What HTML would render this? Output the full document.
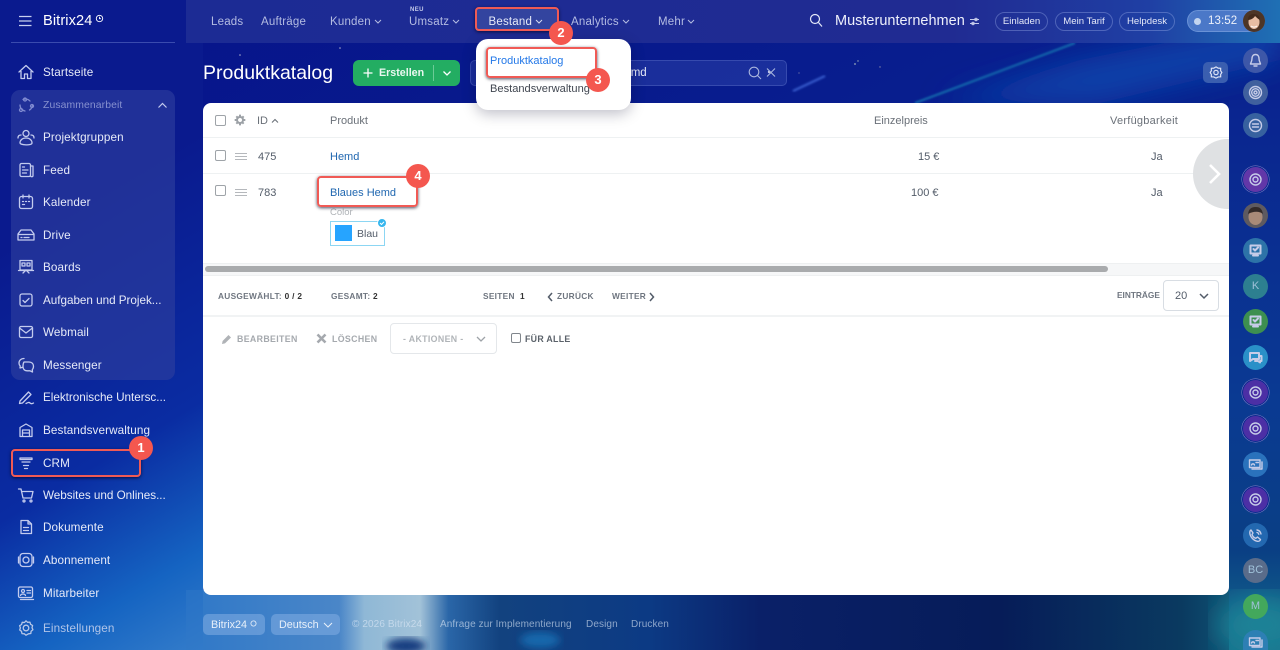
<!DOCTYPE html>
<html lang="de"><head><meta charset="utf-8"><title>Produktkatalog</title>
<style>
*{box-sizing:border-box}
html,body{margin:0;padding:0;width:1280px;height:650px;overflow:hidden;background:#08198a}
body{font-family:"Liberation Sans",sans-serif}
#root{position:absolute;left:0;top:0;width:1280px;height:650px;overflow:hidden}
.a,.t{position:absolute}
.t{white-space:nowrap;line-height:14px}
.s{left:43px;color:#e6eaf8;font-size:11.7px;letter-spacing:.1px}
.x{letter-spacing:-.02px}
.n{color:#b4bce2;font-size:11.5px;top:15px;letter-spacing:.2px}
.ic{position:absolute;left:17px;width:18px;height:18px;fill:none;stroke:#c3cbee;stroke-width:1.3;stroke-linecap:round;stroke-linejoin:round}
.red{position:absolute;border:2.5px solid #f05a55;border-radius:4px;box-shadow:0 1px 3px rgba(0,0,30,.7)}
.b{position:absolute;width:24px;height:24px;border-radius:50%;background:#f4574f;color:#fff;font-size:13px;font-weight:bold;text-align:center;line-height:24px}
.pill{position:absolute;top:12px;height:19px;border:1px solid rgba(170,185,240,.35);border-radius:10px;color:#e4e8f8;font-size:9.6px;line-height:18px;text-align:center}
.r{position:absolute;left:1243px;width:25px;height:25px;border-radius:50%;color:#9fc0d8;font-size:11px;line-height:25px;text-align:center}
.ri{position:absolute;left:5px;top:5px;width:15px;height:15px;fill:none;stroke:#c6cce8;stroke-width:1.4;stroke-linecap:round;stroke-linejoin:round}
.h{color:#6a7078;font-size:11px;top:114px}
.c{position:absolute;width:11px;height:11px;border:1.3px solid #9ea3a8;border-radius:2px;background:#fff}
.d{color:#535c69;font-size:11px}
.f{color:#6f7680;font-size:8.3px;font-weight:bold;letter-spacing:.3px}
.g{color:#a5a9ae;font-size:8.8px;font-weight:bold;letter-spacing:.35px}
.lnk{color:#2067b0;font-size:11px}
.ft{color:rgba(225,235,248,.6);font-size:10px;top:618px;letter-spacing:.1px}
</style></head><body><div id="root">

<svg class="a" style="left:0;top:0" width="1280" height="650" viewBox="0 0 1280 650">
<defs>
<linearGradient id="bg" x1="0" y1="0" x2="1" y2="1"><stop offset="0" stop-color="#07128a"/><stop offset=".5" stop-color="#08208f"/><stop offset="1" stop-color="#062f7a"/></linearGradient>
<linearGradient id="side" gradientUnits="userSpaceOnUse" x1="0" y1="250" x2="240" y2="650"><stop offset="0" stop-color="#0a1a8e"/><stop offset=".5" stop-color="#0a2ca2"/><stop offset=".78" stop-color="#1564c2"/><stop offset="1" stop-color="#3b82cc"/></linearGradient>
<linearGradient id="rail" x1="0" y1="0" x2="0" y2="1"><stop offset="0" stop-color="#0a2490"/><stop offset=".55" stop-color="#0a3a92"/><stop offset=".82" stop-color="#0a3f84"/><stop offset="1" stop-color="#14708c"/></linearGradient>
<linearGradient id="top" x1="0" y1="0" x2="1" y2="0"><stop offset="0" stop-color="#1c2b94"/><stop offset=".7" stop-color="#202b92"/><stop offset=".88" stop-color="#1f3fa4"/><stop offset="1" stop-color="#1f70b4"/></linearGradient>
<linearGradient id="foot" x1="0" y1="0" x2="1" y2="0"><stop offset="0" stop-color="#2f78c8"/><stop offset=".14" stop-color="#4a86c8"/><stop offset=".163" stop-color="#8fb8d6"/><stop offset=".214" stop-color="#a2c2d8"/><stop offset=".24" stop-color="#2a66a8"/><stop offset=".287" stop-color="#12427f"/><stop offset=".424" stop-color="#0c3a84"/><stop offset=".525" stop-color="#0a2068"/><stop offset=".744" stop-color="#061c58"/><stop offset=".91" stop-color="#0a3a60"/><stop offset="1" stop-color="#126a88"/></linearGradient>
<filter id="bl"><feGaussianBlur stdDeviation="14"/></filter>
<filter id="b2"><feGaussianBlur stdDeviation="4"/></filter>
<filter id="b1"><feGaussianBlur stdDeviation="1"/></filter>
</defs>
<rect width="1280" height="650" fill="url(#bg)"/>
<rect x="186" y="590" width="1094" height="60" fill="url(#foot)"/>
<ellipse cx="406" cy="646" rx="20" ry="8" fill="#123e80" filter="url(#b2)"/>
<ellipse cx="540" cy="640" rx="20" ry="8" fill="#1468ac" filter="url(#b2)"/>
<rect x="1229" y="100" width="51" height="550" fill="url(#rail)"/>
<ellipse cx="1262" cy="625" rx="45" ry="30" fill="#1f8296" filter="url(#bl)"/>
<path d="M940 103L1080 60L1280 20V60L1100 103Z" fill="#0c3fa8" filter="url(#bl)"/>
<path d="M915 103L1075 43" stroke="#1a87b8" stroke-width="1.500" filter="url(#b1)"/>
<path d="M793 91L825 76" stroke="#3f66d8" stroke-width="1.800" filter="url(#b1)"/>
<circle cx="855" cy="64" r=".9" fill="#9ab"/><circle cx="858" cy="61" r=".7" fill="#9ab"/><circle cx="769" cy="72" r="1.200" fill="#dde"/><circle cx="880" cy="67" r=".7" fill="#88a"/><circle cx="799" cy="73" r=".6" fill="#88a"/><circle cx="240" cy="55" r=".8" fill="#aac"/><circle cx="340" cy="48" r=".8" fill="#aac"/>
<rect x="0" y="0" width="203" height="650" fill="url(#side)"/>
<rect x="186" y="590" width="17" height="60" fill="#2f78c8" opacity=".5"/>
<rect x="186" width="1094" height="43" fill="url(#top)"/>
<rect x="11" y="42" width="164" height="1" fill="#3a4bae"/>
<rect x="11" y="90" width="164" height="290" rx="9" fill="#2e3f9e" opacity=".62"/>
</svg>

<!-- sidebar -->
<svg class="a" style="left:19px;top:15px" width="14" height="12" fill="none" stroke="#c8d0f0" stroke-width="1.200"><path d="M0 1.500h12.500M0 6h12.500M0 10.500h12.500"/></svg>
<div class="t" style="left:43px;top:14px;color:#fff;font-size:14.600px;letter-spacing:.1px">Bitrix24</div>
<svg class="a" style="left:95px;top:14px" width="9" height="9" fill="none" stroke="#fff" stroke-width=".9"><circle cx="4.500" cy="4.500" r="3.200"/><path d="M4.500 2.800v1.900h1.500"/></svg>

<svg class="ic" style="top:63px" viewBox="0 0 18 18"><path d="M2 9L9 2.500 16 9M4 8v7.500h3.500v-4.500h3v4.500H14V8"/></svg>
<svg class="ic" style="top:96px;stroke:#7f8ad0" viewBox="0 0 18 18"><path d="M6 3.500a6 6 0 0 1 7 1.500M15.500 9a6 6 0 0 1-3 5M8 15a6 6 0 0 1-5-6"/><circle cx="8" cy="3.500" r="1.500"/><circle cx="15" cy="10" r="1.500"/><circle cx="4" cy="14" r="1.500"/></svg>
<svg class="ic" style="top:128px" viewBox="0 0 18 18"><circle cx="9" cy="5.500" r="3"/><path d="M3 15c0-3 2.500-5 6-5s6 2 6 5-12 2-12 0zM1 10c0-2 1-3 3-3M17 10c0-2-1-3-3-3"/></svg>
<svg class="ic" style="top:161px" viewBox="0 0 18 18"><rect x="3" y="2.500" width="10.500" height="13" rx="1.500"/><path d="M13.500 5H16v9.500a1 1 0 0 1-2.500 0M5.500 6h2M5.500 9h5.500M5.500 12h4"/></svg>
<svg class="ic" style="top:193px" viewBox="0 0 18 18"><rect x="2.500" y="3.500" width="13" height="12" rx="2"/><path d="M6 2v3M12 2v3M5.500 8.500h1M8.500 8.500h1M11.500 8.500h1M5.500 11.500h2"/></svg>
<svg class="ic" style="top:226px" viewBox="0 0 18 18"><path d="M4 4h10l3 4v6H1V8zM1 8.500h16M4 11.500h1M7 11.500h5"/></svg>
<svg class="ic" style="top:258px" viewBox="0 0 18 18"><rect x="3" y="2.500" width="12" height="9.500"/><rect x="5" y="5" width="3" height="3"/><rect x="10" y="5" width="3" height="3"/><path d="M6 15l3-3 3 3M1.500 12.500h15"/></svg>
<svg class="ic" style="top:291px" viewBox="0 0 18 18"><rect x="3" y="3" width="12" height="12" rx="2"/><path d="M6 9.500l2 2 4-4"/></svg>
<svg class="ic" style="top:323px" viewBox="0 0 18 18"><rect x="2.500" y="3.500" width="13" height="11" rx="1.500"/><path d="M2.500 5l6.500 5 6.500-5"/></svg>
<svg class="ic" style="top:356px" viewBox="0 0 18 18"><path d="M7 2.500c-3 0-5 2-5 4.500 0 1.200.5 2.300 1.200 3L3 12l2.500-.8M7 6h5c2.800 0 4.500 1.800 4.500 4s-.6 3-1.200 3.600l.2 2.400-2.500-1.200H10c-2.500 0-4-1.500-4-4.400S7 6 7 6z"/></svg>
<svg class="ic" style="top:388px" viewBox="0 0 18 18"><path d="M3 13L11.500 4l2.500 2.500L5.500 15 2.500 15.500zM9 15.500c2-1 3-1.500 4-.5s2 1 3.500 0"/></svg>
<svg class="ic" style="top:421px" viewBox="0 0 18 18"><path d="M3 15.500V6.500L9 3l6 3.500v9zM5.500 15.500V9h7v6.500M5.500 12h7"/></svg>
<svg class="ic" style="top:454px" viewBox="0 0 18 18"><path d="M3 4h12v1.500H3zM5 8h8M6.500 11.500h5M7.500 14.500h3"/></svg>
<svg class="ic" style="top:486px" viewBox="0 0 18 18"><path d="M1.500 3h2.500l2 9h8.500l1.500-6.500H5"/><circle cx="7" cy="15" r="1"/><circle cx="14" cy="15" r="1"/></svg>
<svg class="ic" style="top:518px" viewBox="0 0 18 18"><path d="M4 2.500h7l3.500 3.500v9.500H4zM11 2.500V6h3.500M6.500 9.500h5M6.500 12.500h5"/></svg>
<svg class="ic" style="top:551px" viewBox="0 0 18 18"><rect x="3" y="2.500" width="12" height="13" rx="3"/><circle cx="9" cy="9" r="3"/><path d="M1.500 6v6M16.500 6v6"/></svg>
<svg class="ic" style="top:584px" viewBox="0 0 18 18"><rect x="1.500" y="3" width="14" height="10.500" rx="1.500"/><circle cx="6" cy="7" r="1.500"/><path d="M3.500 11.500c.5-2 4.500-2 5 0M10 6.500h3.500M10 9h3.500M3.500 15.500h13"/></svg>
<svg class="ic" style="top:619px;stroke:#b7c7e8" viewBox="0 0 18 18"><circle cx="9" cy="9" r="2.800"/><path d="M9 1.800l1.600 1.500 2.300-.2.700 2.200 2 1.200-.6 2.200.9 2-1.800 1.500-.3 2.300-2.300.3L9 16.200l-1.700-1.400-2.300-.2-.5-2.300-1.800-1.300.7-2.200-.8-2.100 2-1.200.6-2.200 2.300.2z"/></svg>

<div class="t s" style="top:66px">Startseite</div>
<div class="t s" style="top:99px;color:#8791cf;font-size:10.400px">Zusammenarbeit</div>
<svg class="a" style="left:157px;top:102px" width="11" height="7" fill="none" stroke="#c3cbee" stroke-width="1.200"><path d="M1.500 5.500L5.500 1.500l4 4"/></svg>
<div class="t s" style="top:131px">Projektgruppen</div>
<div class="t s" style="top:164px">Feed</div>
<div class="t s" style="top:196px">Kalender</div>
<div class="t s" style="top:229px">Drive</div>
<div class="t s" style="top:261px">Boards</div>
<div class="t s x" style="top:294px">Aufgaben und Projek...</div>
<div class="t s" style="top:326px">Webmail</div>
<div class="t s" style="top:359px">Messenger</div>
<div class="t s x" style="top:391px">Elektronische Untersc...</div>
<div class="t s" style="top:424px">Bestandsverwaltung</div>
<div class="t s" style="top:457px">CRM</div>
<div class="t s x" style="top:489px">Websites und Onlines...</div>
<div class="t s" style="top:521px">Dokumente</div>
<div class="t s" style="top:554px">Abonnement</div>
<div class="t s" style="top:587px">Mitarbeiter</div>
<div class="t s" style="top:622px;color:#b0c4e8">Einstellungen</div>

<!-- top nav -->
<div class="t n" style="left:211px">Leads</div>
<div class="t n" style="left:261px">Aufträge</div>
<div class="t n" style="left:330px">Kunden</div>
<svg class="a" style="left:374px;top:19px" width="8" height="5" fill="none" stroke="#b4bce2"><path d="M1 1l3 3 3-3"/></svg>
<div class="t" style="left:410px;top:3px;color:#c5cbea;font-size:6px;font-weight:bold;letter-spacing:.4px">NEU</div>
<div class="t n" style="left:409px">Umsatz</div>
<svg class="a" style="left:452px;top:19px" width="8" height="5" fill="none" stroke="#b4bce2"><path d="M1 1l3 3 3-3"/></svg>
<div class="a" style="left:476px;top:8px;width:82px;height:23px;background:#33449f"></div>
<div class="t n" style="left:488.500px;color:#e6eaf8">Bestand</div>
<svg class="a" style="left:535px;top:19px" width="8" height="5" fill="none" stroke="#d5dbf2"><path d="M1 1l3 3 3-3"/></svg>
<div class="t n" style="left:571px">Analytics</div>
<svg class="a" style="left:622px;top:19px" width="8" height="5" fill="none" stroke="#b4bce2"><path d="M1 1l3 3 3-3"/></svg>
<div class="t n" style="left:658px">Mehr</div>
<svg class="a" style="left:687px;top:19px" width="8" height="5" fill="none" stroke="#b4bce2"><path d="M1 1l3 3 3-3"/></svg>
<svg class="a" style="left:809px;top:13px" width="14" height="15" fill="none" stroke="#e4e8f8" stroke-width="1.200"><circle cx="6" cy="6" r="4.500"/><path d="M9.500 9.500L13 13.500"/></svg>
<div class="t" style="left:835px;top:14px;color:#eef0fb;font-size:14.500px">Musterunternehmen</div>
<svg class="a" style="left:969px;top:16px" width="11" height="11" fill="none" stroke="#c5cbea"><path d="M1 3.500h9M1 7.500h9"/><circle cx="7" cy="3.500" r="1.200"/><circle cx="4" cy="7.500" r="1.200"/></svg>
<div class="pill" style="left:995px;width:53px">Einladen</div>
<div class="pill" style="left:1055px;width:58px">Mein Tarif</div>
<div class="pill" style="left:1119px;width:56px">Helpdesk</div>
<div class="a" style="left:1187px;top:10px;width:78px;height:22px;border-radius:11px;background:#4b78c8;border:1px solid #6a92d6"></div>
<div class="a" style="left:1194px;top:18px;width:7px;height:7px;border-radius:50%;background:#c3d5f0"></div>
<div class="t" style="left:1208px;top:14px;color:#eef2fb;font-size:11.500px;letter-spacing:.1px">13:52</div>
<svg class="a" style="left:1243px;top:10px" width="22" height="22" viewBox="0 0 22 22"><circle cx="11" cy="11" r="11" fill="#4d3526"/><ellipse cx="11" cy="12" rx="5.500" ry="7" fill="#e7bda3"/><path d="M5 10c0-5 3-6 6-6s6 2 6 6c-2-1-4-3-5-4-1 2-4 4-7 4z" fill="#432a1c"/><path d="M8 16c2 1.500 4 1.500 6 0" stroke="#fff" fill="none"/></svg>

<!-- toolbar -->
<div class="t" style="left:203px;top:62px;color:#fff;font-size:19.500px;line-height:22px">Produktkatalog</div>
<div class="a" style="left:353px;top:60px;width:107px;height:26px;border-radius:6px;background:#23ad62"></div>
<div class="a" style="left:433px;top:65px;width:1px;height:16px;background:#6ccb96"></div>
<svg class="a" style="left:363px;top:68px" width="10" height="10" stroke="#fff" stroke-width="1.300"><path d="M5 .5v9M.5 5h9"/></svg>
<div class="t" style="left:379px;top:66px;color:#eaf8f0;font-size:10.700px;font-weight:bold">Erstellen</div>
<svg class="a" style="left:442px;top:70px" width="10" height="7" fill="none" stroke="#fff" stroke-width="1.300"><path d="M1.500 1.500L5 5l3.500-3.500"/></svg>
<div class="a" style="left:470px;top:60px;width:317px;height:26px;border-radius:5px;background:rgba(100,125,215,.2);border:1px solid rgba(140,160,230,.25)"></div>
<div class="t" style="left:616px;top:66px;color:#e8ecf8;font-size:11.500px">Hemd</div>
<svg class="a" style="left:748px;top:66px" width="28" height="14" fill="none" stroke="#aab6de" stroke-width="1.100"><circle cx="6" cy="6" r="4.800"/><path d="M9.500 9.500L13 13M19 2.500l8 8M27 2.500l-8 8"/></svg>
<div class="a" style="left:1203px;top:62px;width:25px;height:21px;border-radius:5px;background:#3a5eaf"></div>
<svg class="a" style="left:1209px;top:65px" width="14" height="15" viewBox="0 0 18 18" fill="none" stroke="#e0e6f8" stroke-width="1.500"><circle cx="9" cy="9" r="2.800"/><path d="M9 1.800l2.800 1.600 3.200.2v3.300L16.500 9l-1.500 2.400v3.200l-3.200.1L9 16.200l-2.800-1.500-3.200-.1v-3.200L1.500 9 3 6.900V3.600l3.200-.2z"/></svg>

<!-- card -->
<div class="a" style="left:203px;top:103px;width:1026px;height:492px;border-radius:8px;background:#fff"></div>
<div class="a" style="left:203px;top:137px;width:1026px;height:1px;background:#eef1f2"></div>
<div class="a" style="left:203px;top:173px;width:1026px;height:1px;background:#eef1f2"></div>
<div class="a" style="left:203px;top:263px;width:1026px;height:13px;background:#f6f7f8;border-top:1px solid #eef0f1;border-bottom:1px solid #eef0f1"></div>
<div class="a" style="left:205px;top:266px;width:903px;height:6px;border-radius:3px;background:#a9abad"></div>
<div class="a" style="left:203px;top:315px;width:1026px;height:2px;background:#f1f3f4"></div>

<div class="c" style="left:215px;top:115px"></div>
<svg class="a" style="left:234px;top:114px" width="12" height="12" viewBox="0 0 18 18" fill="none" stroke="#9ca1a6" stroke-width="3"><circle cx="9" cy="9" r="4.500"/><path d="M9 1v3M9 14v3M1 9h3M14 9h3M3.500 3.500l2 2M12.500 12.500l2 2M14.500 3.500l-2 2M5.500 12.500l-2 2"/></svg>
<div class="t h" style="left:257px">ID</div>
<svg class="a" style="left:271px;top:118px" width="8" height="6" fill="none" stroke="#6a7078" stroke-width="1.100"><path d="M1 4.500l3-3 3 3"/></svg>
<div class="t h" style="left:330px">Produkt</div>
<div class="t h" style="left:874px">Einzelpreis</div>
<div class="t h" style="left:1110px;letter-spacing:.25px">Verfügbarkeit</div>

<div class="c" style="left:215px;top:150px"></div>
<svg class="a" style="left:235px;top:152px" width="12" height="10" stroke="#b5b8bc"><path d="M0 1.500h12M0 4.500h12M0 7.500h12"/></svg>
<div class="t d" style="left:258px;top:150px">475</div>
<div class="t lnk" style="left:330px;top:150px">Hemd</div>
<div class="t d" style="left:918px;top:150px">15 €</div>
<div class="t d" style="left:1151px;top:150px">Ja</div>

<div class="c" style="left:215px;top:185px"></div>
<svg class="a" style="left:235px;top:188px" width="12" height="10" stroke="#b5b8bc"><path d="M0 1.500h12M0 4.500h12M0 7.500h12"/></svg>
<div class="t d" style="left:258px;top:186px">783</div>
<div class="t lnk" style="left:330px;top:186px">Blaues Hemd</div>
<div class="t d" style="left:911px;top:186px">100 €</div>
<div class="t d" style="left:1151px;top:186px">Ja</div>
<div class="t" style="left:330px;top:206px;color:#b0b4b8;font-size:9.500px">Color</div>
<div class="a" style="left:330px;top:221px;width:55px;height:25px;border:1px solid #8cd6f3;background:#fff"></div>
<div class="a" style="left:335px;top:225px;width:17px;height:16px;background:#26a4ff"></div>
<div class="t d" style="left:357px;top:227px;font-size:10.500px">Blau</div>
<svg class="a" style="left:377px;top:218px" width="10" height="10"><circle cx="5" cy="5" r="4.500" fill="#35b6ee" stroke="#fff"/><path d="M3 5l1.500 1.500L7 3.800" fill="none" stroke="#fff"/></svg>

<div class="a" style="left:1193px;top:139px;width:36px;height:70px;border-radius:35px 0 0 35px;background:#dfe1e3"></div>
<svg class="a" style="left:1208px;top:163px" width="14" height="22" fill="none" stroke="#fff" stroke-width="2.600"><path d="M2 2l9 9-9 9"/></svg>

<div class="t f" style="left:218px;top:289px">AUSGEWÄHLT: <b style="color:#333">0 / 2</b></div>
<div class="t f" style="left:331px;top:289px">GESAMT: <b style="color:#333">2</b></div>
<div class="t f" style="left:483px;top:289px">SEITEN &nbsp;<b style="color:#333">1</b></div>
<svg class="a" style="left:547px;top:292px" width="6" height="10" fill="none" stroke="#535c69" stroke-width="1.500"><path d="M5 1L1.500 5 5 9"/></svg>
<div class="t f" style="left:557px;top:289px">ZURÜCK</div>
<div class="t f" style="left:612px;top:289px">WEITER</div>
<svg class="a" style="left:649px;top:292px" width="6" height="10" fill="none" stroke="#535c69" stroke-width="1.500"><path d="M1 1l3.500 4L1 9"/></svg>
<div class="t f" style="left:1117px;top:288px;letter-spacing:0">EINTRÄGE</div>
<div class="a" style="left:1163px;top:280px;width:56px;height:31px;border:1px solid #d8dde3;border-radius:4px;background:#fff"></div>
<div class="t d" style="left:1175px;top:289px">20</div>
<svg class="a" style="left:1199px;top:293px" width="10" height="7" fill="none" stroke="#535c69" stroke-width="1.500"><path d="M1 1l4 4 4-4"/></svg>

<svg class="a" style="left:222px;top:334px" width="10" height="10" fill="#b0b3b7"><path d="M0 10l.6-3L6.500 1l2.500 2.500L3 9.400z"/></svg>
<div class="t g" style="left:237px;top:332px">BEARBEITEN</div>
<svg class="a" style="left:316px;top:333px" width="11" height="11" stroke="#a5a9ae" stroke-width="2.600"><path d="M1.500 1.500l8 8M9.500 1.500l-8 8"/></svg>
<div class="t g" style="left:332px;top:332px">LÖSCHEN</div>
<div class="a" style="left:390px;top:323px;width:107px;height:31px;border:1px solid #e4e7ea;border-radius:4px;background:#fff"></div>
<div class="t g" style="left:403px;top:332px;color:#b0b4b8">- AKTIONEN -</div>
<svg class="a" style="left:476px;top:336px" width="10" height="7" fill="none" stroke="#9ea3a8" stroke-width="1.300"><path d="M1 1l4 4 4-4"/></svg>
<div class="c" style="left:511px;top:333px;width:10px;height:10px;border-color:#80868c"></div>
<div class="t f" style="left:525px;top:332px;font-size:8.800px;color:#5b626a">FÜR ALLE</div>

<!-- dropdown -->
<div class="a" style="left:476px;top:39px;width:155px;height:71px;border-radius:12px;background:#fff;box-shadow:0 4px 14px rgba(0,0,40,.25)"></div>
<div class="t" style="left:490px;top:54px;color:#2378e8;font-size:11px">Produktkatalog</div>
<div class="t" style="left:490px;top:82px;color:#404650;font-size:11.100px">Bestandsverwaltung</div>

<!-- footer -->
<div class="a" style="left:203px;top:614px;width:62px;height:21px;border-radius:5px;background:rgba(125,170,225,.6)"></div>
<div class="t" style="left:211px;top:618px;color:#e8f0fa;font-size:10.800px">Bitrix24</div>
<svg class="a" style="left:250px;top:620px" width="7" height="7" fill="none" stroke="#e8f0fa" stroke-width=".8"><circle cx="3.500" cy="3.500" r="2.600"/></svg>
<div class="a" style="left:271px;top:614px;width:69px;height:21px;border-radius:5px;background:rgba(125,170,225,.6)"></div>
<div class="t" style="left:279px;top:618px;color:#e8f0fa;font-size:10.800px">Deutsch</div>
<svg class="a" style="left:323px;top:622px" width="10" height="6" fill="none" stroke="#e8f0fa"><path d="M1 1l4 4 4-4"/></svg>
<div class="t ft" style="left:352px">© 2026 Bitrix24</div>
<div class="t ft" style="left:440px">Anfrage zur Implementierung</div>
<div class="t ft" style="left:586px">Design</div>
<div class="t ft" style="left:631px">Drucken</div>

<!-- right rail -->
<div class="r" style="top:48px;background:#3d57a8"><svg class="ri" viewBox="0 0 15 15"><path d="M7.500 1.500c-2.500 0-3.500 2-3.500 4 0 3-1.500 4.500-1.500 5.500h10c0-1-1.500-2.500-1.500-5.500 0-2-1-4-3.500-4zM6 13h3"/></svg></div>
<div class="r" style="top:80px;background:#40609e"><svg class="ri" viewBox="0 0 15 15"><circle cx="7.500" cy="7.500" r="6"/><circle cx="7.500" cy="7.500" r="3.800"/><circle cx="7.500" cy="7.500" r="1.500"/></svg></div>
<div class="r" style="top:113px;background:#37619f"><svg class="ri" viewBox="0 0 15 15"><circle cx="7.500" cy="7.500" r="6"/><path d="M4.500 6h6M4.500 9h6"/></svg></div>
<div class="r" style="top:167px;background:#6237a8;box-shadow:0 0 0 1px #0a2a90,0 0 0 1.500px #8a80c8"><svg class="ri" viewBox="0 0 15 15"><circle cx="7.500" cy="7.500" r="5.500"/><circle cx="7.500" cy="7.500" r="2.500"/></svg></div>
<svg class="a" style="left:1243px;top:203px" width="25" height="25" viewBox="0 0 25 25"><circle cx="12.500" cy="12.500" r="12.500" fill="#5e5a60"/><ellipse cx="12.500" cy="14" rx="7" ry="8" fill="#a88a78"/><path d="M5 11c1-6 4-7 8-7s6 2 7 7c-3-3-10-3-15 0z" fill="#332a28"/></svg>
<div class="r" style="top:238px;background:#2d73a8"><svg class="ri" viewBox="0 0 15 15" style="stroke-width:2"><rect x="2.500" y="2.500" width="10" height="8"/><path d="M5 12.500h5M5.500 6l1.500 1.500 3-3"/></svg></div>
<div class="r" style="top:274px;background:#2d7f90">K</div>
<div class="r" style="top:309px;background:#3d8f50"><svg class="ri" viewBox="0 0 15 15" style="stroke-width:2"><rect x="2.500" y="2.500" width="10" height="8"/><path d="M5 12.500h5M5.500 6l1.500 1.500 3-3"/></svg></div>
<div class="r" style="top:345px;background:#2a90c8"><svg class="ri" viewBox="0 0 15 15" style="stroke-width:2"><path d="M2 3h9v6H5l-3 2zM12 6h1.500v5H12v1.500L10 11H7"/></svg></div>
<div class="r" style="top:380px;background:#4c2fa5;box-shadow:0 0 0 1px #0a2a90,0 0 0 1.500px #8a80c8"><svg class="ri" viewBox="0 0 15 15"><circle cx="7.500" cy="7.500" r="5.500"/><circle cx="7.500" cy="7.500" r="2.500"/></svg></div>
<div class="r" style="top:416px;background:#4c2fa5;box-shadow:0 0 0 1px #0a2a90,0 0 0 1.500px #8a80c8"><svg class="ri" viewBox="0 0 15 15"><circle cx="7.500" cy="7.500" r="5.500"/><circle cx="7.500" cy="7.500" r="2.500"/></svg></div>
<div class="r" style="top:452px;background:#2a72bc"><svg class="ri" viewBox="0 0 15 15"><rect x="1.500" y="3" width="10.500" height="7.500"/><path d="M3.500 8c.5-1.500 2.500-1.500 3 0M8 5.500h2.500M14 5v7H4"/></svg></div>
<div class="r" style="top:487px;background:#4c2fa5;box-shadow:0 0 0 1px #0a2a90,0 0 0 1.500px #8a80c8"><svg class="ri" viewBox="0 0 15 15"><circle cx="7.500" cy="7.500" r="5.500"/><circle cx="7.500" cy="7.500" r="2.500"/></svg></div>
<div class="r" style="top:523px;background:#2368b0"><svg class="ri" viewBox="0 0 15 15"><path d="M3 2l2 3-1 1.500c.6 1.800 2 3.200 3.800 3.800L9.500 9l3 2.500c-.5 1.500-2 2-3 1.800C5.500 12.800 2 8.500 1.800 5 1.800 3.500 2 2.500 3 2zM9 2c2 .3 3.500 1.800 4 4M9 4.500c1 .2 1.600.8 1.800 1.800"/></svg></div>
<div class="r" style="top:558px;background:#5a6c8a">BC</div>
<div class="r" style="top:594px;background:#43a85c">M</div>
<div class="r" style="top:630px;height:20px;border-radius:12.500px 12.500px 0 0;overflow:hidden;background:#2d7fb4"><svg class="ri" viewBox="0 0 15 15"><rect x="1.500" y="3" width="10.500" height="7.500"/><path d="M3.500 8c.5-1.500 2.500-1.500 3 0M8 5.500h2.500M14 5v7H4"/></svg></div>

<!-- annotations -->
<div class="red" style="left:11px;top:449px;width:130px;height:28px"></div>
<div class="b" style="left:129px;top:436px">1</div>
<div class="red" style="left:475px;top:7px;width:84px;height:24px"></div>
<div class="b" style="left:549px;top:21px">2</div>
<div class="red" style="left:486px;top:47px;width:111px;height:31px"></div>
<div class="b" style="left:586px;top:68px">3</div>
<div class="red" style="left:317px;top:176px;width:101px;height:31px"></div>
<div class="b" style="left:406px;top:164px">4</div>
</div></body></html>
